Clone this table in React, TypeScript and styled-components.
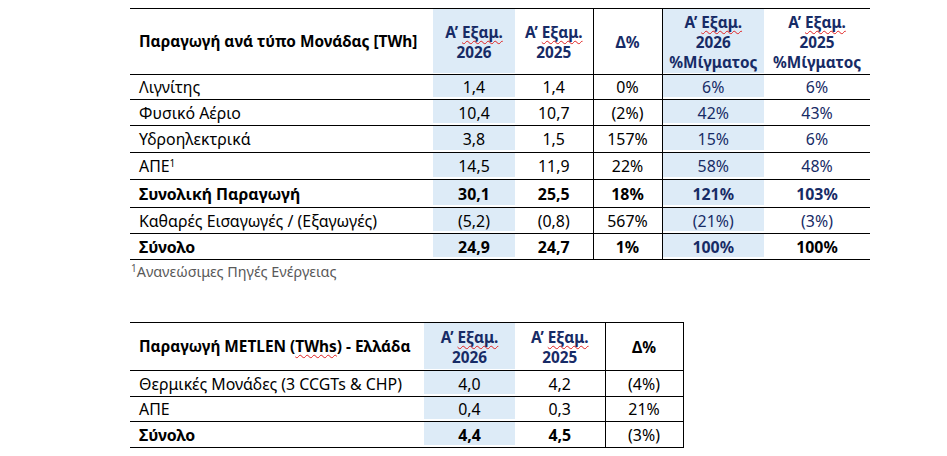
import React from "react";
import styled, { createGlobalStyle } from "styled-components";

const NAVY = "#172b66";
const SHADE = "#ddebf7";

const GlobalStyle = createGlobalStyle`
  html, body {
    margin: 0;
    padding: 0;
    background: #ffffff;
  }
  body {
    font-family: "Noto Sans", "DejaVu Sans", sans-serif;
    font-size: 15.9px;
    color: #000000;
  }
`;

type Tone = "black" | "navy";

type Col = {
  width: number;
  shade?: boolean;
  rule?: boolean;
  tone?: Tone;
};

type Row = {
  label: React.ReactNode;
  values: string[];
  bold?: boolean;
  height: number;
  tones?: (Tone | undefined)[];
  weights?: (boolean | undefined)[];
};

const Page = styled.main`
  padding: 8px 0 0 130px;
  display: flex;
  flex-direction: column;
  align-items: flex-start;
`;

const Table = styled.table<{ $width: number }>`
  width: ${({ $width }) => $width}px;
  border-collapse: collapse;
  table-layout: fixed;
  border-top: 1px solid #000;
`;

const Line = styled.tr<{ $height: number }>`
  height: ${({ $height }) => $height}px;
  border-bottom: 1px solid #000;
`;

const Cell = styled.td<{
  $shade?: boolean;
  $rule?: boolean;
  $tone?: Tone;
  $bold?: boolean;
  $left?: boolean;
  $head?: boolean;
}>`
  padding: 0 ${({ $left }) => ($left ? "9px" : "2px")};
  text-align: ${({ $left }) => ($left ? "left" : "center")};
  vertical-align: middle;
  white-space: nowrap;
  line-height: 20px;
  font-size: ${({ $head, $left }) => ($head ? ($left ? "15.4px" : "15.3px") : "inherit")};
  font-weight: ${({ $bold }) => ($bold ? 700 : 400)};
  color: ${({ $tone }) => ($tone === "navy" ? NAVY : "#000")};
  background: ${({ $shade }) => ($shade ? SHADE : "transparent")};
  box-shadow: ${({ $shade, $head }) =>
    $shade ? `inset 0 ${$head ? -1 : -2}px 0 #fff` : "none"};
  border-left: ${({ $rule }) => ($rule ? "1px solid #000" : "none")};
  border-right: ${({ $rule }) => ($rule ? "1px solid #000" : "none")};
`;

const Squiggle = styled.span`
  text-decoration: underline wavy #e02020;
  text-decoration-thickness: 1px;
  text-underline-offset: 2px;
  text-decoration-skip-ink: none;
`;

const Sup = styled.sup`
  font-size: 10px;
  line-height: 0;
  vertical-align: 5px;
`;

const Footnote = styled.p`
  margin: 2px 0 0 1px;
  font-size: 14.4px;
  line-height: 20px;
  color: #595959;
`;

const Spacer = styled.div`
  height: 40px;
`;

const Period = ({ year, extra }: { year: string; extra?: string }) => (
  <>
    Α’ <Squiggle>Εξαμ.</Squiggle>
    <br />
    {year}
    {extra && (
      <>
        <br />
        {extra}
      </>
    )}
  </>
);

const mixCols: Col[] = [
  { width: 303 },
  { width: 82, shade: true },
  { width: 78 },
  { width: 69, rule: true },
  { width: 102, shade: true, tone: "navy" },
  { width: 106, tone: "navy" },
];

const mixRows: Row[] = [
  { label: "Λιγνίτης", values: ["1,4", "1,4", "0%", "6%", "6%"], height: 25 },
  { label: "Φυσικό Αέριο", values: ["10,4", "10,7", "(2%)", "42%", "43%"], height: 26 },
  { label: "Υδροηλεκτρικά", values: ["3,8", "1,5", "157%", "15%", "6%"], height: 27 },
  {
    label: (
      <>
        ΑΠΕ<Sup>1</Sup>
      </>
    ),
    values: ["14,5", "11,9", "22%", "58%", "48%"],
    height: 27,
  },
  {
    label: "Συνολική Παραγωγή",
    values: ["30,1", "25,5", "18%", "121%", "103%"],
    bold: true,
    height: 28,
  },
  {
    label: "Καθαρές Εισαγωγές / (Εξαγωγές)",
    values: ["(5,2)", "(0,8)", "567%", "(21%)", "(3%)"],
    height: 26,
  },
  {
    label: "Σύνολο",
    values: ["24,9", "24,7", "1%", "100%", "100%"],
    bold: true,
    height: 26,
    tones: [undefined, undefined, undefined, undefined, "black"],
  },
];

const metlenCols: Col[] = [
  { width: 294 },
  { width: 91, shade: true },
  { width: 90 },
  { width: 78, rule: true },
];

const metlenRows: Row[] = [
  {
    label: "Θερμικές Μονάδες (3 CCGTs & CHP)",
    values: ["4,0", "4,2", "(4%)"],
    height: 26,
  },
  { label: "ΑΠΕ", values: ["0,4", "0,3", "21%"], height: 25 },
  {
    label: "Σύνολο",
    values: ["4,4", "4,5", "(3%)"],
    bold: true,
    height: 26,
    weights: [true, true, false],
  },
];

const DataTable = ({
  cols,
  head,
  headHeight,
  rows,
}: {
  cols: Col[];
  head: { content: React.ReactNode; tone: Tone }[];
  headHeight: number;
  rows: Row[];
}) => (
  <Table $width={cols.reduce((sum, c) => sum + c.width, 0)}>
    <colgroup>
      {cols.map((c, i) => (
        <col key={i} style={{ width: c.width }} />
      ))}
    </colgroup>
    <thead>
      <Line $height={headHeight}>
        {head.map((h, i) => (
          <Cell
            as="th"
            key={i}
            $head
            $left={i === 0}
            $bold
            $tone={h.tone}
            $shade={cols[i].shade}
            $rule={cols[i].rule}
          >
            {h.content}
          </Cell>
        ))}
      </Line>
    </thead>
    <tbody>
      {rows.map((r, ri) => (
        <Line key={ri} $height={r.height}>
          <Cell $left $bold={r.bold}>
            {r.label}
          </Cell>
          {r.values.map((v, vi) => {
            const col = cols[vi + 1];
            return (
              <Cell
                key={vi}
                $shade={col.shade}
                $rule={col.rule}
                $tone={r.tones?.[vi] ?? col.tone}
                $bold={r.weights?.[vi] ?? r.bold}
              >
                {v}
              </Cell>
            );
          })}
        </Line>
      ))}
    </tbody>
  </Table>
);

export default function App() {
  return (
    <>
      <GlobalStyle />
      <Page>
        <DataTable
          cols={mixCols}
          headHeight={66}
          head={[
            { content: "Παραγωγή ανά τύπο Μονάδας [TWh]", tone: "black" },
            { content: <Period year="2026" />, tone: "navy" },
            { content: <Period year="2025" />, tone: "navy" },
            { content: "Δ%", tone: "navy" },
            { content: <Period year="2026" extra="%Μίγματος" />, tone: "navy" },
            { content: <Period year="2025" extra="%Μίγματος" />, tone: "navy" },
          ]}
          rows={mixRows}
        />
        <Footnote>
          <Sup>1</Sup>Ανανεώσιμες Πηγές Ενέργειας
        </Footnote>
        <Spacer />
        <DataTable
          cols={metlenCols}
          headHeight={48}
          head={[
            {
              content: (
                <>
                  Παραγωγή METLEN (<Squiggle>TWhs</Squiggle>) - Ελλάδα
                </>
              ),
              tone: "black",
            },
            { content: <Period year="2026" />, tone: "navy" },
            { content: <Period year="2025" />, tone: "navy" },
            { content: "Δ%", tone: "black" },
          ]}
          rows={metlenRows}
        />
      </Page>
    </>
  );
}
